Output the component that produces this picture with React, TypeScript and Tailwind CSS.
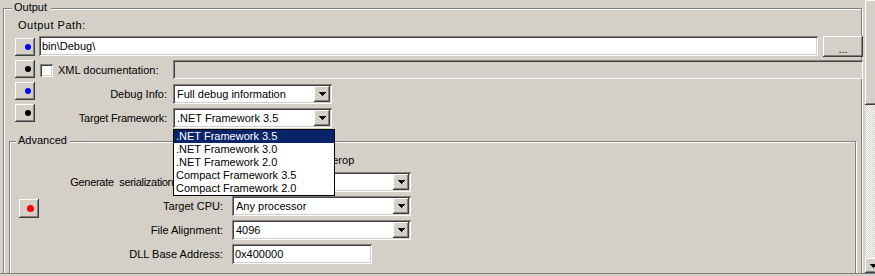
import React from "react";

// classic win32 bevels
const SUNKEN =
  "shadow-[inset_1px_1px_0_#808080,inset_-1px_-1px_0_#fff,inset_2px_2px_0_#404040,inset_-2px_-2px_0_#d4d0c8]";
const RAISED =
  "shadow-[inset_-1px_-1px_0_#404040,inset_1px_1px_0_#fff,inset_-2px_-2px_0_#808080]";
const ETCHED = "border border-[#808080] shadow-[inset_1px_1px_0_#fff,1px_1px_0_#fff]";

function DownTriangle() {
  return (
    <svg width="7" height="4" viewBox="0 0 7 4" shapeRendering="crispEdges">
      <path d="M0 0h7v1h-7z M1 1h5v1h-5z M2 2h3v1h-3z M3 3h1v1h-1z" fill="#000" />
    </svg>
  );
}

function Select({ value, width }: { value: string; width: string }) {
  return (
    <div className={`flex items-center h-full bg-white ${SUNKEN} ${width}`}>
      <span className="flex-1 pl-[4px] whitespace-nowrap overflow-hidden">{value}</span>
      <div className={`w-[16px] h-[16px] mr-[2px] bg-[#d4d0c8] flex items-center justify-center ${RAISED}`}>
        <DownTriangle />
      </div>
    </div>
  );
}

function DotButton({ color }: { color: string }) {
  return (
    <div className={`w-[20px] h-[18px] bg-[#d4d0c8] flex items-center pl-[10px] ${RAISED}`}>
      <span className={`w-[6px] h-[6px] rounded-full ${color}`} />
    </div>
  );
}

function Checkbox() {
  return <span className={`inline-block w-[13px] h-[13px] bg-white ${SUNKEN}`} />;
}

const frameworks = [
  ".NET Framework 3.5",
  ".NET Framework 3.0",
  ".NET Framework 2.0",
  "Compact Framework 3.5",
  "Compact Framework 2.0",
];

export default function App() {
  return (
    <div className="w-[875px] h-[276px] bg-[#d4d0c8] flex flex-col overflow-hidden text-black text-[11px] leading-[13px] font-['Liberation_Sans',Arial,sans-serif]">
      <div className="flex h-[273px]">
        <div className="flex-1 overflow-hidden pl-[3px] pr-[3px] pt-[8px]">
          {/* Output group */}
          <div className={`relative pt-[10px] pb-[40px] ${ETCHED}`}>
            <span className="absolute -top-[8px] left-[8px] px-[2px] pr-[4px] bg-[#d4d0c8]">Output</span>
            <div className="ml-[14px] tracking-[0.5px]">Output Path:</div>

            <div className="flex mt-[4px] pl-[11px] -mr-[2px]">
              <div className="flex flex-col gap-[4px] pt-[2px] w-[20px]">
                <DotButton color="bg-[#0000ff]" />
                <DotButton color="bg-black" />
                <DotButton color="bg-[#0000ff]" />
                <DotButton color="bg-black" />
              </div>

              <div className="flex-1 ml-[4px] grid grid-cols-[128px_1fr] gap-x-[6px] gap-y-[4px] auto-rows-[20px]">
                <div className="col-span-2 flex gap-[5px]">
                  <div className={`flex-1 h-full bg-white flex items-center pl-[3px] ${SUNKEN}`}>bin\Debug\</div>
                  <div className={`w-[40px] h-[21px] bg-[#d4d0c8] flex items-end justify-center pb-[4px] ${RAISED}`}>
                    <span className="leading-[8px]">...</span>
                  </div>
                </div>

                <div className="flex items-center gap-[5px] pl-[1px] whitespace-nowrap">
                  <Checkbox />
                  <span>XML documentation:</span>
                </div>
                <div className={`h-[19px] bg-[#d4d0c8] ${SUNKEN}`} />

                <div className="flex items-center justify-end">Debug Info:</div>
                <Select value="Full debug information" width="w-[159px]" />

                <div className="flex items-center justify-end whitespace-nowrap tracking-[-0.2px]">Target Framework:</div>
                <div className="relative w-[159px] h-full">
                  <Select value=".NET Framework 3.5" width="w-[159px]" />
                  <div className="absolute left-0 top-[21px] z-10 w-[162px] border border-black bg-white">
                    {frameworks.map((f, i) => (
                      <div
                        key={f}
                        className={`h-[13px] pl-[2px] whitespace-nowrap ${i === 0 ? "bg-[#0a246a] text-white" : ""}`}
                      >
                        {f}
                      </div>
                    ))}
                  </div>
                </div>
              </div>
            </div>

            {/* Advanced group */}
            <div className={`relative mt-[13px] mx-[5px] pt-[10px] pb-[30px] pl-[9px] ${ETCHED}`}>
              <span className="absolute -top-[8px] left-[6px] px-[2px] pr-[3px] bg-[#d4d0c8]">Advanced</span>
              <div className="grid grid-cols-[20px_175px_1fr] grid-rows-[16px] auto-rows-[20px] gap-x-[9px] gap-y-[4px]">
                <div className="col-span-2 flex items-center justify-end">
                  <Checkbox />
                </div>
                <div className="flex items-center whitespace-nowrap">Register for COM interop</div>

                <div />
                <div className="flex items-center justify-end whitespace-nowrap tracking-[-0.3px]">Generate&nbsp; serialization assembly:</div>
                <Select value="Auto" width="w-[179px]" />

                <div className="pt-[3px]">
                  <div className={`w-[20px] h-[19px] bg-[#d4d0c8] flex items-center pl-[8px] ${RAISED}`}>
                    <span className="w-[7px] h-[7px] rounded-full bg-[#ff0000]" />
                  </div>
                </div>
                <div className="flex items-center justify-end">Target CPU:</div>
                <Select value="Any processor" width="w-[179px]" />

                <div />
                <div className="flex items-center justify-end">File Alignment:</div>
                <Select value="4096" width="w-[179px]" />

                <div />
                <div className="flex items-center justify-end">DLL Base Address:</div>
                <div className={`w-[140px] h-full bg-white flex items-center pl-[3px] ${SUNKEN}`}>0x400000</div>
              </div>
            </div>
          </div>
        </div>

        {/* vertical scrollbar, partly off screen */}
        <div className="w-[10px] overflow-hidden flex flex-col">
          <div className={`w-[17px] h-[105px] bg-[#d4d0c8] ${RAISED}`} />
          <div className="w-[17px] flex-1 bg-[repeating-conic-gradient(#fff_0_25%,#d4d0c8_0_50%)] bg-size-[2px_2px]" />
          <div className={`w-[17px] h-[15px] bg-[#d4d0c8] flex items-center justify-center ${RAISED}`}>
            <DownTriangle />
          </div>
        </div>
      </div>
      <div className="h-[3px] border-t border-[#808080]" />
    </div>
  );
}
